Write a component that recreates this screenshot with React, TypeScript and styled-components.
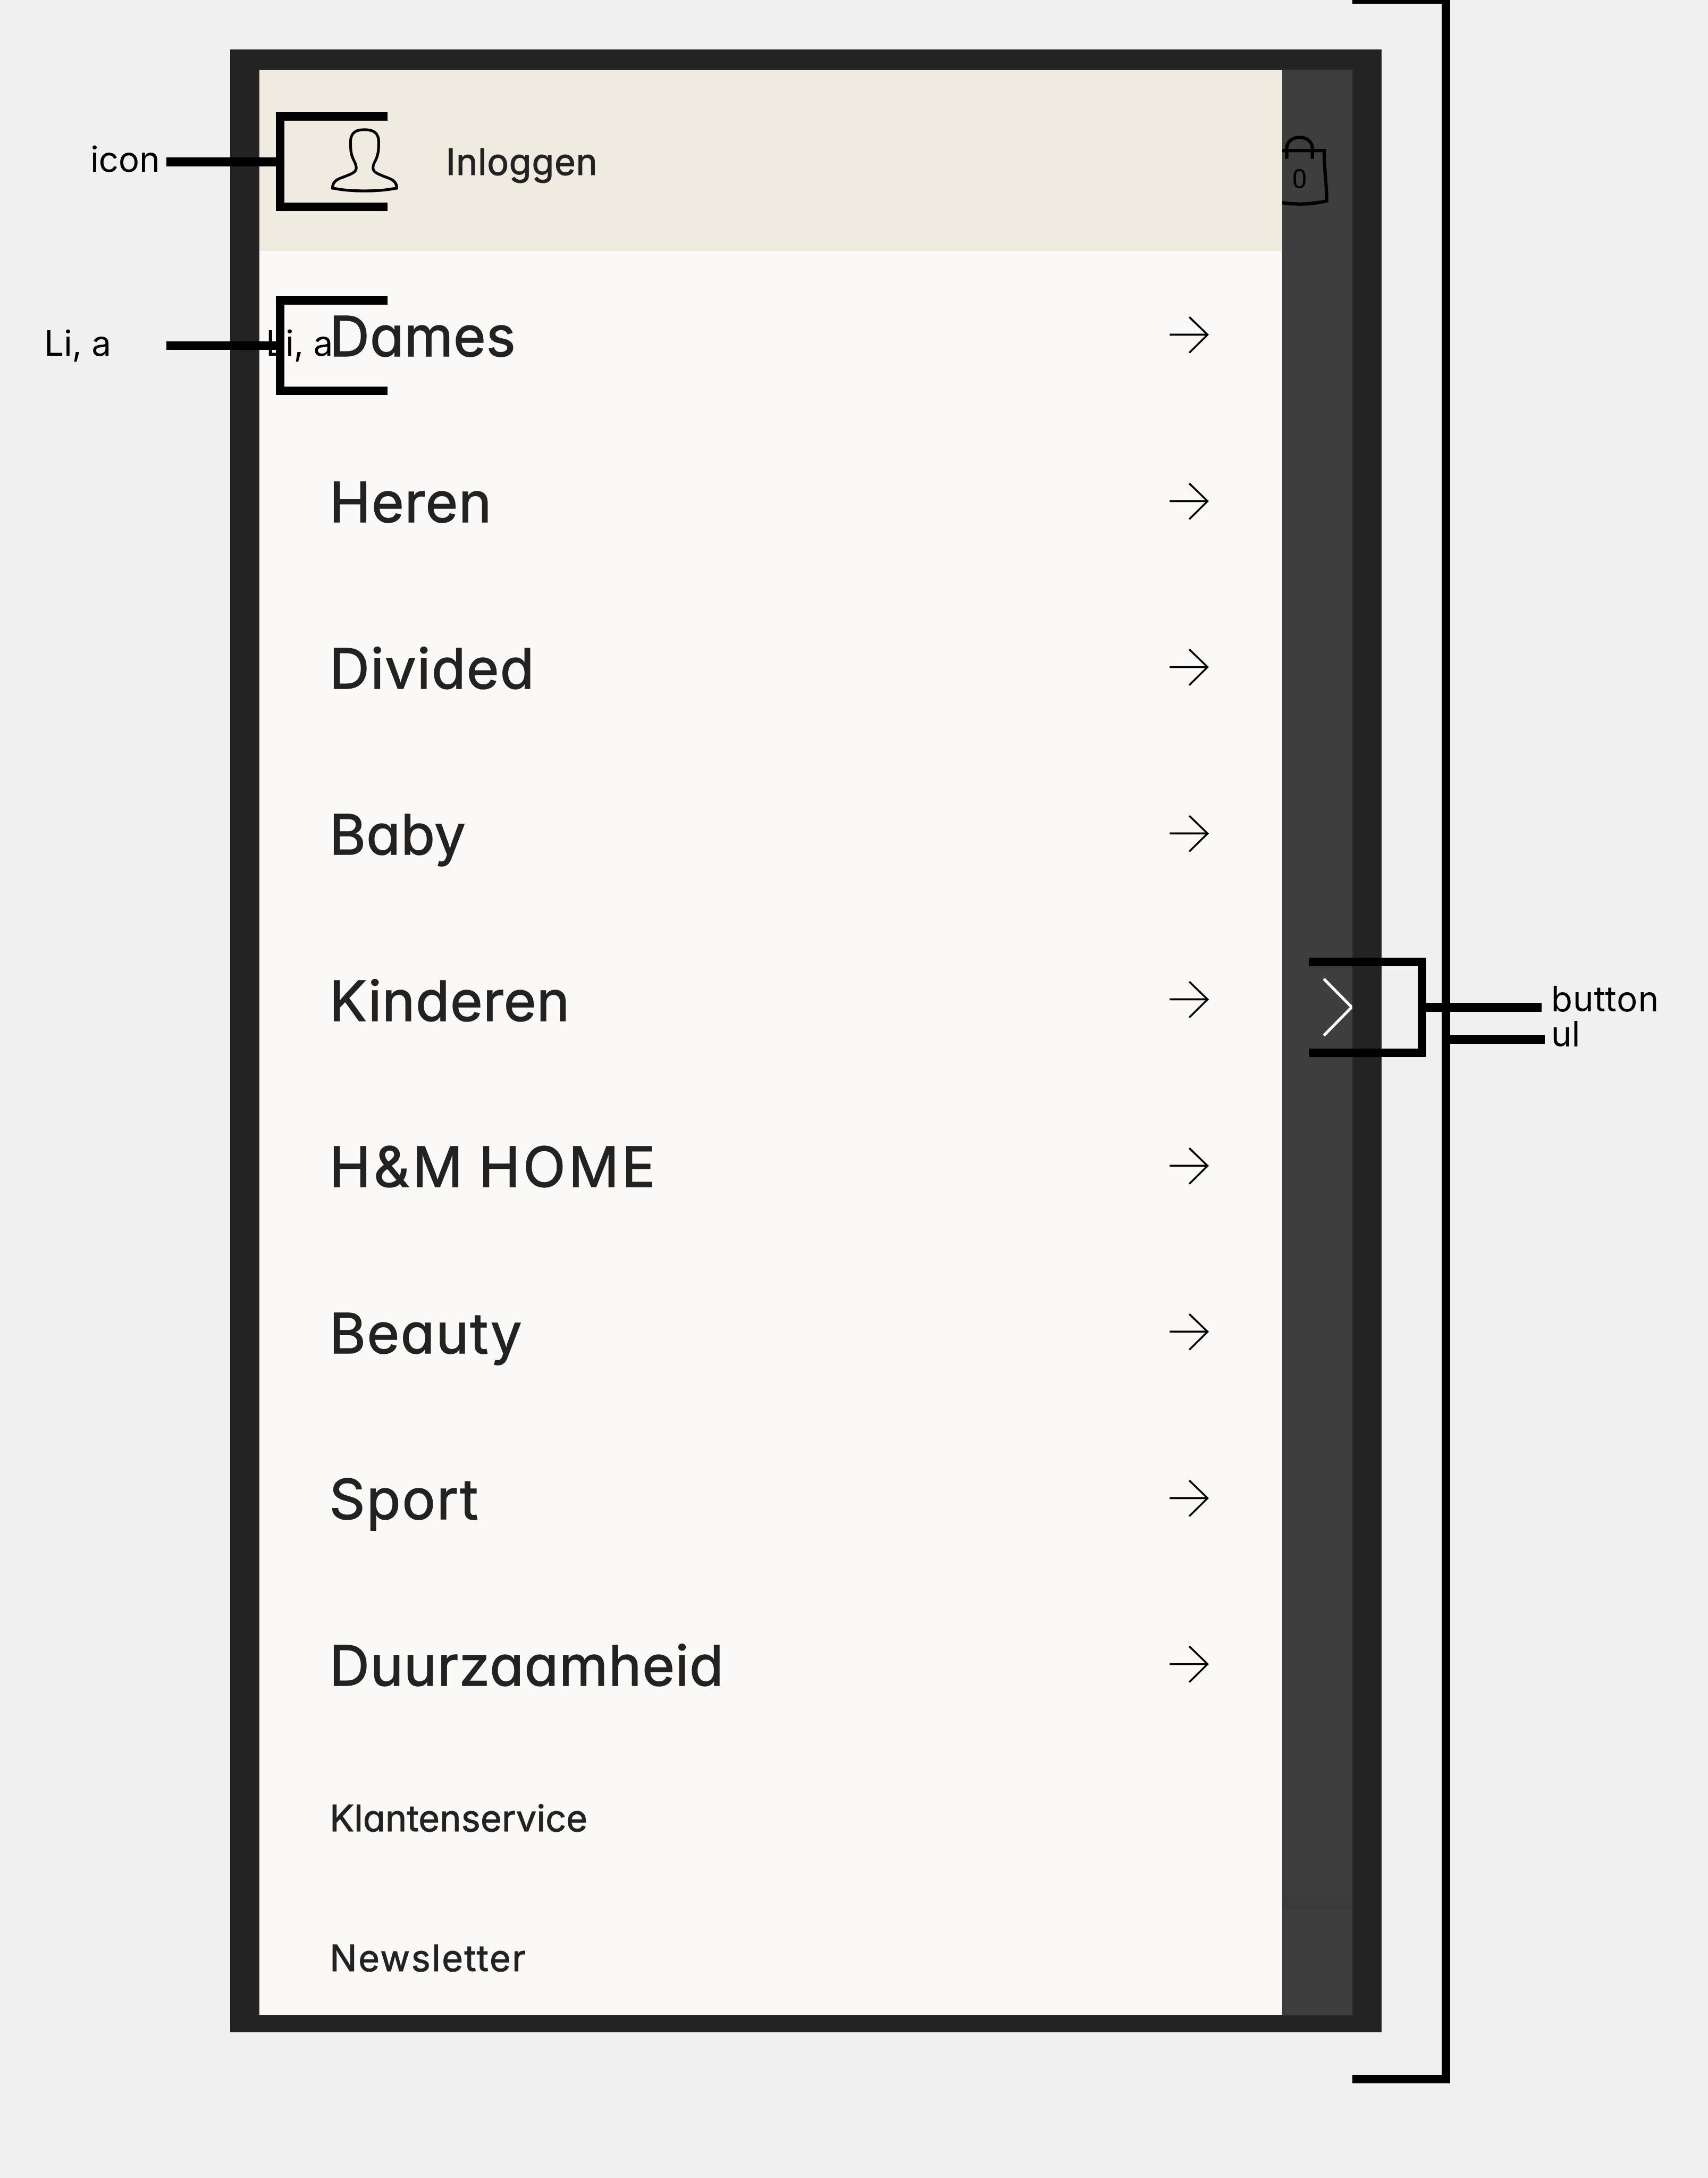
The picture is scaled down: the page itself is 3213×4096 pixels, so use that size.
import React from "react";
import styled, { createGlobalStyle } from "styled-components";

const SCALE = 3213 / 4102;
const px = (n: number) => `${(n * SCALE).toFixed(3)}px`;

const GlobalStyle = createGlobalStyle`
  * { box-sizing: border-box; }
  body { margin: 0; background: #f0f0f0; }
`;

const Board = styled.main`
  position: relative;
  width: 3213px;
  height: 4096px;
  padding: ${px(119)} 0 0 ${px(553)};
  overflow: hidden;
  background: #f0f0f0;
  font-family: Inter, "Liberation Sans", sans-serif;
`;

const Device = styled.section`
  width: ${px(2765)};
  height: ${px(4760)};
  padding: ${px(49)} ${px(70)} ${px(42)};
  background: #232324;
`;

const Screen = styled.div`
  display: flex;
  width: ${px(2625)};
  height: ${px(4669)};
  overflow: hidden;
  background: #3e3e3e;
  box-shadow: 0 0 0 ${px(3.5)} #29292a;
`;

const Drawer = styled.nav`
  display: flex;
  flex: none;
  flex-direction: column;
  width: ${px(2457)};
  height: 100%;
  overflow: hidden;
  background: #faf9f8;
  color: #222;
`;

const Account = styled.header`
  display: flex;
  flex: none;
  align-items: center;
  gap: ${px(112)};
  height: ${px(434)};
  padding-left: ${px(168)};
  background: #f0ebe0;
`;

const AccountIcon = styled.svg`
  width: ${px(168)};
  height: ${px(160)};
`;

const AccountLabel = styled.span<{ $spacing: number }>`
  padding-top: ${px(8)};
  font-size: ${px(87)};
  line-height: 1.2;
  letter-spacing: ${(p) => px(p.$spacing)};
  font-feature-settings: "cv11";
  -webkit-text-stroke: ${px(1.5)} #222;
`;

const Departments = styled.ul`
  flex: none;
  margin: 0;
  padding: ${px(3.6)} 0 0;
  list-style: none;
`;

const Department = styled.li`
  display: flex;
  align-items: center;
  justify-content: space-between;
  height: ${px(399)};
  padding: 0 ${px(176)} 0 ${px(168)};
`;

const DepartmentLink = styled.a<{ $spacing: number; $wordSpacing?: number }>`
  padding-top: ${px(3)};
  font-size: ${px(134)};
  line-height: 1.3;
  letter-spacing: ${(p) => px(p.$spacing)};
  word-spacing: ${(p) => px(p.$wordSpacing ?? 0)};
  font-feature-settings: "cv11";
  white-space: nowrap;
  -webkit-text-stroke: ${px(2)} #222;
`;

const ArrowIcon = styled.svg`
  width: ${px(98)};
  height: ${px(96)};
`;

const Services = styled.div`
  display: flex;
  flex: none;
  flex-direction: column;
  align-items: flex-start;
  padding: ${px(1)} 0 0 ${px(169)};
`;

const ServiceLink = styled.a<{ $spacing: number }>`
  font-size: ${px(87)};
  line-height: ${px(336)};
  letter-spacing: ${(p) => px(p.$spacing)};
  font-feature-settings: "cv11";
  -webkit-text-stroke: ${px(1.5)} #222;
`;

const Backdrop = styled.aside`
  display: flex;
  flex-direction: column;
  justify-content: space-between;
  width: ${px(168)};
  padding: ${px(152)} 0 ${px(252)};
`;

const BagIcon = styled.svg`
  width: ${px(168)};
  height: ${px(180)};
`;

const CloseButton = styled.button`
  width: ${px(168)};
  height: ${px(156)};
  margin-bottom: ${px(184)};
  padding: 0;
  border: 0;
  background: none;
`;

const Chevron = styled.svg`
  display: block;
  width: 100%;
  height: 100%;
`;

const Fade = styled.div`
  height: ${px(65)};
  background: linear-gradient(#3e3e3d, #3a3a3a);
`;

const Callout = styled.div<{ $x: number; $y: number }>`
  position: absolute;
  left: ${(p) => px(p.$x)};
  top: ${(p) => px(p.$y)};
  display: flex;
  align-items: center;
`;

const Bracket = styled.div<{ $w: number; $h?: number; $open: "left" | "right" }>`
  flex: none;
  width: ${(p) => px(p.$w)};
  height: ${(p) => px(p.$h ?? 238)};
  border: ${px(21.3)} solid #000;
  border-${(p) => p.$open}: 0;
`;

const Connector = styled.div<{ $w: number; $gap?: number }>`
  flex: none;
  width: ${(p) => px(p.$w)};
  height: ${px(21)};
  margin-right: ${(p) => px(p.$gap ?? 0)};
  background: #000;
`;

const Note = styled.span<{ $w: number; $lift: number; $spacing?: number }>`
  flex: none;
  width: ${(p) => px(p.$w)};
  padding-bottom: ${(p) => px(p.$lift)};
  font-size: ${px(84)};
  line-height: ${px(84)};
  letter-spacing: ${(p) => px(p.$spacing ?? 0)};
  white-space: nowrap;
  color: #000;
`;

const departments = [
  { label: "Dames", spacing: 0.6 },
  { label: "Heren", spacing: 1.6 },
  { label: "Divided", spacing: 2.1 },
  { label: "Baby", spacing: 1 },
  { label: "Kinderen", spacing: 1.1 },
  { label: "H&M HOME", spacing: 6.8, wordSpacing: -13 },
  { label: "Beauty", spacing: 2.7 },
  { label: "Sport", spacing: 3.2 },
  { label: "Duurzaamheid", spacing: 1.45 },
];

const services = [
  { label: "Klantenservice", spacing: 0.3 },
  { label: "Newsletter", spacing: 3.3 },
];

export default function App() {
  return (
    <>
      <GlobalStyle />
      <Board>
        <Device>
          <Screen>
            <Drawer>
              <Account>
                <AccountIcon viewBox="93 105 504 480" fill="none" stroke="#000" strokeWidth="20">
                  <path d="M345 124C275 124 244 150 244 215C244 285 250 312 268 345C282 372 285 380 285 398C285 430 255 440 205 460C150 478 114 495 114 545Q220 565 345 565Q470 565 577 545C577 495 540 478 485 460C435 440 406 430 406 398C406 380 409 372 424 345C440 312 447 285 447 215C447 150 415 124 345 124Z" />
                </AccountIcon>
                <AccountLabel $spacing={1}>Inloggen</AccountLabel>
              </Account>
              <Departments>
                {departments.map((d) => (
                  <Department key={d.label}>
                    <DepartmentLink $spacing={d.spacing} $wordSpacing={d.wordSpacing}>
                      {d.label}
                    </DepartmentLink>
                    <ArrowIcon viewBox="0 0 98 96" fill="none" stroke="#000" strokeWidth="4.6">
                      <path d="M3 46.5H94M50 4L94 46.5L50 90" />
                    </ArrowIcon>
                  </Department>
                ))}
              </Departments>
              <Services>
                {services.map((s) => (
                  <ServiceLink key={s.label} $spacing={s.spacing}>{s.label}</ServiceLink>
                ))}
              </Services>
            </Drawer>
            <Backdrop>
              <BagIcon viewBox="3080 320 168 180" fill="none" stroke="#000" strokeWidth="8">
                <path d="M3091 381V356C3091 340 3104 329.500 3121.500 329.500S3152.500 340 3152.500 356V381" />
                <path d="M3062 361H3181C3180 400 3187 440 3187 482Q3121 497 3056 482" />
                <text x="3121.500" y="451.500" textAnchor="middle" fontFamily="Roboto, sans-serif" fontSize="64" fill="#000" stroke="none">0</text>
              </BagIcon>
              <CloseButton aria-label="Menu sluiten">
                <Chevron viewBox="3080 2340 168 156" fill="none" stroke="#fff" strokeWidth="7">
                  <path d="M3180 2350L3247 2418L3180 2486" />
                </Chevron>
              </CloseButton>
              <Fade />
            </Backdrop>
          </Screen>
        </Device>

        <Callout $x={217} $y={269.5}>
          <Note $w={182} $lift={11} $spacing={-0.4}>icon</Note>
          <Connector $w={263.5} />
          <Bracket $w={268.5} $open="right" />
        </Callout>

        <Callout $x={106} $y={710.5}>
          <Note $w={293} $lift={11} $spacing={-0.4}>Li, a</Note>
          <Connector $w={263.5} />
          <Bracket $w={268.5} $open="right" />
        </Callout>
        <Callout $x={638.5} $y={782}>
          <Note $w={155} $lift={0} $spacing={-0.4}>Li, a</Note>
        </Callout>

        <Callout $x={3143} $y={2299.5}>
          <Bracket $w={282} $open="left" />
          <Connector $w={278} $gap={22} />
          <Note $w={260} $lift={39} $spacing={1.1}>button</Note>
        </Callout>

        <Callout $x={3248} $y={-11}>
          <Bracket $w={234.5} $h={5012.5} $open="left" />
          <Connector $w={227.5} $gap={15} />
          <Note $w={80} $lift={24}>ul</Note>
        </Callout>
      </Board>
    </>
  );
}
